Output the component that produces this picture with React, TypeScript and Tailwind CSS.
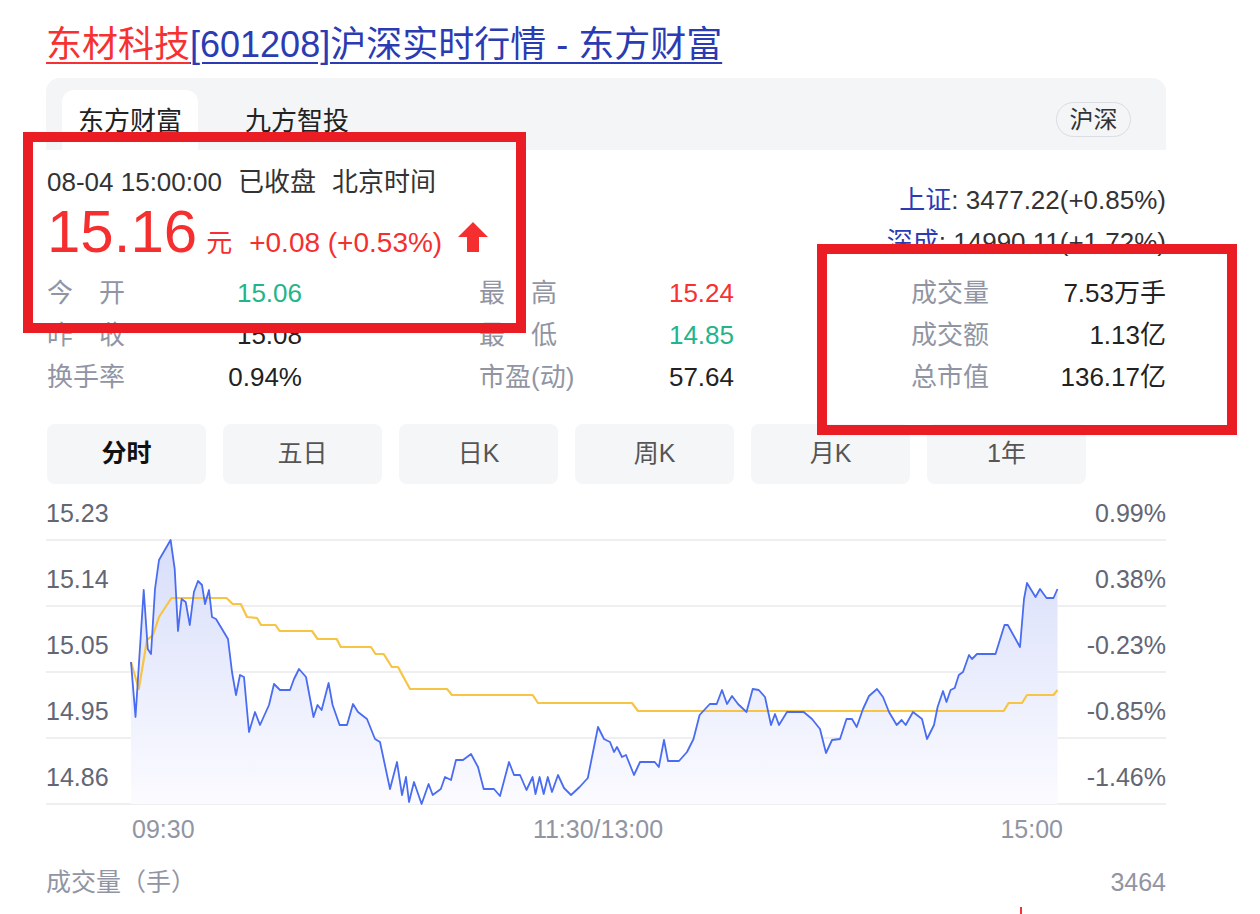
import React from "react";

const blueLine: [number, number][] = [
  [131, 660], [135.5, 715], [143.7, 588], [147.8, 647], [151, 652], [155, 587], [159, 558], [170.6, 538],
  [174.7, 567], [178, 629], [181.6, 597], [185.7, 600], [189.8, 623], [193.9, 590], [198, 579], [202, 583],
  [205, 602], [209, 588], [212, 615], [216, 617], [222, 627], [228, 637], [232, 670], [236, 693], [240, 673],
  [244, 675], [249, 730], [255, 710], [260, 723], [269, 703], [274, 682], [280, 688], [290, 688], [294, 677],
  [299, 667], [306, 675], [313.5, 715], [317.5, 703], [321.6, 708], [328.6, 681], [332.6, 703], [339.6, 723],
  [347, 723], [353, 702], [358, 710], [367, 717], [375, 737], [380, 740], [390, 787], [397, 760], [402, 793],
  [406, 775], [409, 800], [414, 780], [421.6, 802], [428.6, 782], [432.7, 793], [440.8, 787], [445, 775],
  [451, 778], [456, 758], [463, 758], [471, 752], [478, 765], [483.7, 787], [494, 787], [500, 794], [509, 760],
  [514, 773], [520, 773], [526.5, 788], [532.6, 775], [535.5, 792], [539.6, 775], [543.7, 792], [547.8, 775],
  [552, 790], [558, 773], [564, 786], [571, 793], [579.6, 785], [587.8, 776], [598, 725], [604, 737],
  [610, 740], [614, 750], [617, 745], [622, 755], [626, 753], [634, 773], [640, 760], [654.7, 760],
  [658.8, 765], [664, 738], [668, 759], [679, 759], [687, 750], [693.5, 737], [699.6, 713], [709.8, 702],
  [716.7, 702], [722, 688], [727, 702], [732, 694], [738, 702], [746.5, 710], [752.7, 687], [758.8, 688],
  [765, 695], [771, 723], [775, 712], [779, 723], [787, 710], [803.7, 710], [812, 717], [820, 727], [826, 751],
  [832, 738], [840, 737], [846.5, 717], [852, 717], [856.7, 725], [863, 707], [869, 694], [877, 687],
  [883, 695], [889, 710], [896.7, 723], [901.6, 718], [905.7, 723], [913, 710], [922, 717], [927, 737],
  [934, 723], [937.6, 705], [943, 689], [946.5, 700], [950.6, 688], [954.7, 686], [958.8, 673], [963, 670],
  [969, 653], [972, 657], [977, 652], [995.5, 652], [1004.5, 623], [1007.8, 623], [1020, 645], [1024, 597],
  [1027, 581], [1035.5, 595], [1040, 587], [1046.5, 596], [1053.5, 596], [1057.5, 587],
];

const avgLine: [number, number][] = [
  [131, 660], [138.8, 687], [147, 638], [153, 633], [159, 615], [171.4, 596], [226.5, 596], [232.7, 602],
  [240.8, 602], [247, 615], [257, 616], [261, 623], [275.5, 623], [279.6, 629], [312, 629], [317.6, 637],
  [336.7, 637], [340.8, 645], [371, 645], [375.5, 652], [383.7, 652], [391.8, 665], [398, 665], [410, 687],
  [447, 687], [452, 693], [532.7, 693], [538, 701], [632, 701], [638, 709], [1003.7, 709], [1008.6, 701],
  [1022, 701], [1027, 693], [1053.5, 693], [1057.5, 688],
];

const toPath = (pts: [number, number][]) =>
  pts.map((p, i) => `${i === 0 ? "M" : "L"}${p[0]},${p[1]}`).join(" ");

const gridY = [538, 604, 670, 736, 802];
const leftLabels = ["15.23", "15.14", "15.05", "14.95", "14.86"];
const rightLabels = ["0.99%", "0.38%", "-0.23%", "-0.85%", "-1.46%"];

function Label2({ a, b }: { a: string; b: string }) {
  return (
    <span className="flex w-[78px] justify-between text-[#9195a3]">
      <span>{a}</span>
      <span>{b}</span>
    </span>
  );
}

function StatRow({ label, value, color }: { label: React.ReactNode; value: string; color: string }) {
  return (
    <div className="flex h-[42px] items-center justify-between">
      {typeof label === "string" ? <span className="text-[#9195a3]">{label}</span> : label}
      <span className={color}>{value}</span>
    </div>
  );
}

export default function App() {
  const fillPath = toPath(blueLine) + ` L1057.5,802 L131,802 Z`;
  return (
    <div className="relative h-[914px] w-[1260px] overflow-hidden bg-white font-['Liberation_Sans','Noto_Sans_CJK_SC',sans-serif] text-[26px] text-[#222]">
      <div className="ml-[46px] w-[1120px] pt-[23px]">
        {/* title */}
        <div className="h-[44px] whitespace-nowrap text-[36px] leading-[44px]">
          <span className="text-[#f73131] underline decoration-[2px] underline-offset-[5px]">东材科技</span>
          <span className="text-[#2b3bb3] underline decoration-[2px] underline-offset-[5px]">[601208]沪深实时行情 - 东方财富</span>
        </div>

        {/* tab card */}
        <div className="mt-[11px] flex h-[72px] items-end justify-between rounded-t-[14px] bg-[#f4f5f7] pl-[16px] pr-[35px]">
          <div className="flex items-end gap-[31px]">
            <div className="flex h-[60px] w-[136px] items-center justify-center rounded-t-[12px] bg-white pt-[2px] text-[26px] text-[#222]">
              东方财富
            </div>
            <div className="flex h-[60px] w-[136px] items-center justify-center pt-[2px] text-[26px] text-[#222]">
              九方智投
            </div>
          </div>
          <div className="mb-[13px] flex h-[35px] w-[75px] items-center justify-center rounded-full border-[1.5px] border-[#dcdde2] text-[24px] text-[#333]">
            沪深
          </div>
        </div>

        {/* info */}
        <div className="flex justify-between pl-[1px] pt-[11px]">
          <div className="flex flex-col">
            <div className="flex h-[42px] items-center whitespace-nowrap text-[#333]">
              <span>08-04 15:00:00</span>
              <span className="ml-[16px]">已收盘</span>
              <span className="ml-[16px]">北京时间</span>
            </div>
            <div className="flex h-[58px] items-baseline whitespace-nowrap text-[#f52f2f]">
              <span className="text-[60px] leading-[58px]">15.16</span>
              <span className="ml-[9px] text-[26px]">元</span>
              <span className="ml-[17px] text-[28px]">+0.08 (+0.53%)</span>
              <svg className="mb-[-4px] ml-[16px]" width="30" height="30" viewBox="0 0 30 30">
                <polygon points="15,0 30,15 21,15 21,30 9,30 9,15 0,15" fill="#f52f2f" />
              </svg>
            </div>
          </div>
          <div className="flex flex-col items-end pt-[18px] text-[#333]">
            <div className="h-[42px] leading-[42px] whitespace-nowrap">
              <span className="text-[#2b3bb3]">上证</span>: 3477.22(+0.85%)
            </div>
            <div className="h-[42px] leading-[42px] whitespace-nowrap">
              <span className="text-[#2b3bb3]">深成</span>: 14990.11(+1.72%)
            </div>
          </div>
        </div>

        {/* stats */}
        <div className="mt-[9px] flex justify-between pl-[1px]">
          <div className="flex w-[255px] flex-col">
            <StatRow label={<Label2 a="今" b="开" />} value="15.06" color="text-[#22b58b]" />
            <StatRow label={<Label2 a="昨" b="收" />} value="15.08" color="text-[#222]" />
            <StatRow label="换手率" value="0.94%" color="text-[#222]" />
          </div>
          <div className="flex w-[255px] flex-col">
            <StatRow label={<Label2 a="最" b="高" />} value="15.24" color="text-[#f73131]" />
            <StatRow label={<Label2 a="最" b="低" />} value="14.85" color="text-[#22b58b]" />
            <StatRow label="市盈(动)" value="57.64" color="text-[#222]" />
          </div>
          <div className="flex w-[255px] flex-col">
            <StatRow label="成交量" value="7.53万手" color="text-[#222]" />
            <StatRow label="成交额" value="1.13亿" color="text-[#222]" />
            <StatRow label="总市值" value="136.17亿" color="text-[#222]" />
          </div>
        </div>

        {/* period buttons */}
        <div className="mt-[26px] flex gap-[17px] pl-[1px]">
          {["分时", "五日", "日K", "周K", "月K", "1年"].map((t, i) => (
            <div
              key={t}
              className={`flex h-[60px] w-[159px] items-center justify-center rounded-[8px] bg-[#f5f6f8] text-[25px] ${
                i === 0 ? "font-bold text-[#111]" : "text-[#555]"
              }`}
            >
              {t}
            </div>
          ))}
        </div>

        {/* chart */}
        <svg className="-ml-[46px] mt-[8px] block" width="1260" height="360" viewBox="0 490 1260 360">
          <defs>
            <linearGradient id="fillg" gradientUnits="userSpaceOnUse" x1="0" y1="538" x2="0" y2="802">
              <stop offset="0" stopColor="#d8defa" />
              <stop offset="1" stopColor="#fbfbff" />
            </linearGradient>
          </defs>
          {gridY.map((y) => (
            <line key={y} x1="46" x2="1166" y1={y} y2={y} stroke="#efeff1" strokeWidth="2" />
          ))}
          <path d={fillPath} fill="url(#fillg)" />
          <path d={toPath(avgLine)} fill="none" stroke="#f7c544" strokeWidth="2.2" strokeLinejoin="round" />
          <path d={toPath(blueLine)} fill="none" stroke="#4a6cf0" strokeWidth="1.8" strokeLinejoin="round" />
          {leftLabels.map((t, i) => (
            <text key={t} x="46" y={520 + i * 66} fontSize="25" fill="#626675">
              {t}
            </text>
          ))}
          {rightLabels.map((t, i) => (
            <text key={t} x="1166" y={520 + i * 66} fontSize="25" fill="#626675" textAnchor="end">
              {t}
            </text>
          ))}
          <text x="132" y="836" fontSize="25" fill="#9195a3">09:30</text>
          <text x="598" y="836" fontSize="25" fill="#9195a3" textAnchor="middle">11:30/13:00</text>
          <text x="1063" y="836" fontSize="25" fill="#9195a3" textAnchor="end">15:00</text>
        </svg>

        {/* volume header */}
        <div className="mt-[11px] flex h-[40px] items-center justify-between text-[25px] text-[#9195a3]">
          <span>成交量（手）</span>
          <span>3464</span>
        </div>
        <svg className="-ml-[46px] block" width="1260" height="13" viewBox="0 901 1260 13">
          <rect x="1020" y="905" width="2" height="9" fill="#f73131" />
        </svg>
      </div>

      {/* annotation boxes */}
      <div className="absolute left-[23px] top-[132px] h-[201px] w-[503px] border-[10px] border-[#ea1c24]" />
      <div className="absolute left-[817px] top-[244px] h-[191px] w-[420px] border-[10px] border-[#ea1c24]" />
    </div>
  );
}
